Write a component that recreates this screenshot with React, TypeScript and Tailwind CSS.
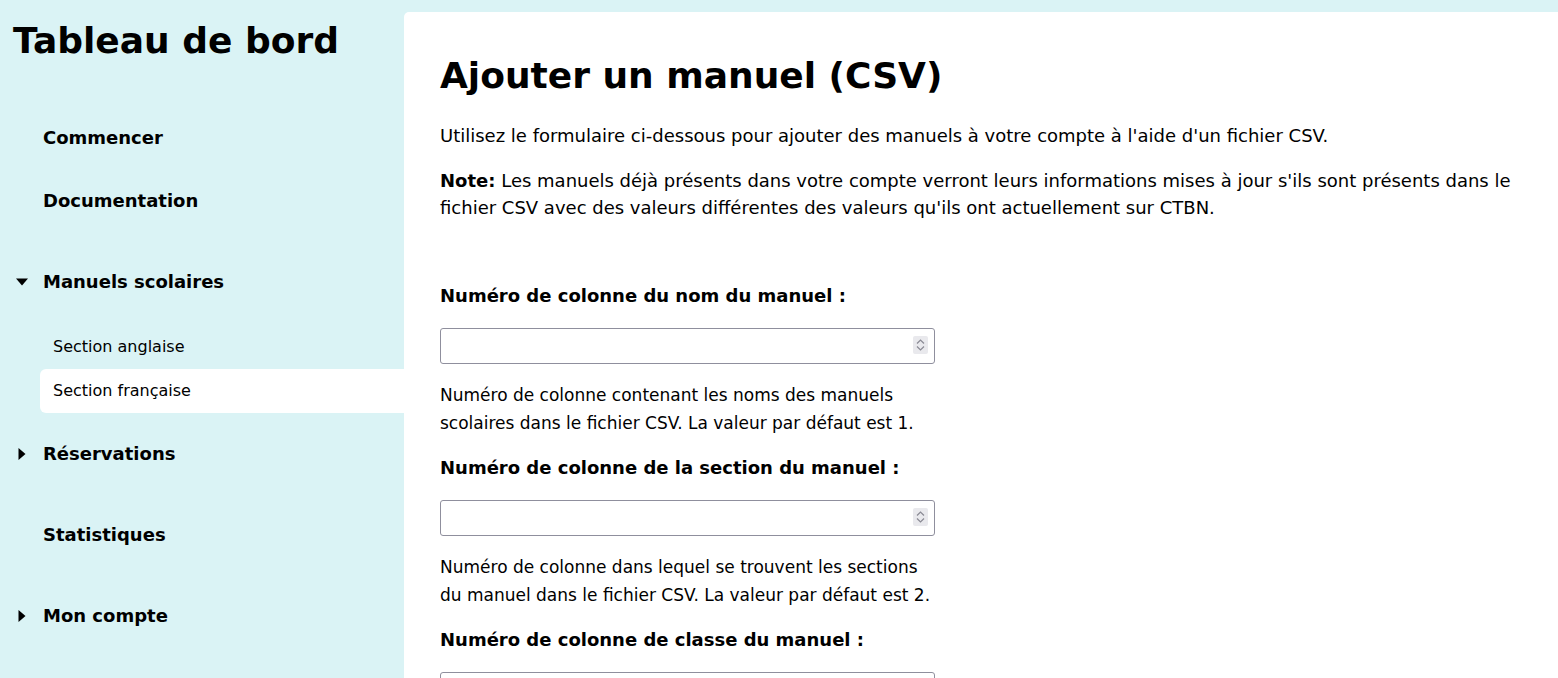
const font = "font-['DejaVu_Sans',_'Liberation_Sans',_sans-serif]";

function CaretDown() {
  return (
    <svg width="14" height="8" viewBox="0 0 14 8" className="shrink-0">
      <polygon points="1,0.5 13,0.5 7,7.5" fill="#000" />
    </svg>
  );
}

function CaretRight() {
  return (
    <svg width="8" height="14" viewBox="0 0 8 14" className="shrink-0">
      <polygon points="0.5,1 7.5,7 0.5,13" fill="#000" />
    </svg>
  );
}

function NavItem({
  label,
  caret,
  className = "",
}: {
  label: string;
  caret?: "down" | "right";
  className?: string;
}) {
  return (
    <div className={`flex h-[63px] items-center ${className}`}>
      <div className="flex w-[43px] justify-center pl-[1px]">
        {caret === "down" && <CaretDown />}
        {caret === "right" && <CaretRight />}
      </div>
      <span className="text-[18px] font-bold">{label}</span>
    </div>
  );
}

function Spinner() {
  return (
    <div className="pointer-events-none absolute right-[7px] top-[8px] flex h-[18px] w-[15px] flex-col items-center justify-center gap-[2px] rounded-[2px] bg-[#e9e9ed]">
      <svg width="9" height="5" viewBox="0 0 9 5">
        <polyline points="1,4.5 4.5,1 8,4.5" fill="none" stroke="#8a8a94" strokeWidth="1.2" />
      </svg>
      <svg width="9" height="5" viewBox="0 0 9 5">
        <polyline points="1,0.5 4.5,4 8,0.5" fill="none" stroke="#8a8a94" strokeWidth="1.2" />
      </svg>
    </div>
  );
}

function NumberField({ label, help }: { label: string; help: string }) {
  return (
    <div className="mb-[17px]">
      <label className="mb-[19px] block text-[18px] font-bold leading-[27px]">{label}</label>
      <div className="relative">
        <input
          type="number"
          className="block h-[36px] w-full rounded-[3px] border border-[#8f8f9d] bg-white px-2 text-[17px] [appearance:textfield] [&::-webkit-inner-spin-button]:appearance-none [&::-webkit-outer-spin-button]:appearance-none"
        />
        <Spinner />
      </div>
      <p className="mt-[17px] text-[17px] leading-[28px]">{help}</p>
    </div>
  );
}

export default function App() {
  return (
    <div className={`flex min-h-[678px] bg-[#daf3f5] text-black ${font}`}>
      {/* Sidebar */}
      <aside className="w-[404px] shrink-0">
        <h1 className="pl-[13px] pt-[20px] text-[36px] font-bold leading-[41px]">Tableau de bord</h1>
        <nav className="mt-[45px]">
          <NavItem label="Commencer" />
          <NavItem label="Documentation" />
          <NavItem label="Manuels scolaires" caret="down" className="mt-[18px]" />
          <div className="mt-[12px] pl-[40px]">
            <div className="flex h-[44px] items-center pl-[13px] text-[16px]">Section anglaise</div>
            <div className="flex h-[44px] items-center rounded-l-md bg-white pl-[13px] text-[16px]">
              Section française
            </div>
          </div>
          <NavItem label="Réservations" caret="right" className="mt-[9px]" />
          <NavItem label="Statistiques" className="mt-[18px]" />
          <NavItem label="Mon compte" caret="right" className="mt-[18px]" />
        </nav>
      </aside>

      {/* Main */}
      <main className="mt-[12px] flex-1 rounded-tl-[5px] bg-white px-[36px] pt-[43px]">
        <h1 className="text-[36px] font-bold leading-[42px]">Ajouter un manuel (CSV)</h1>
        <p className="mt-[25px] text-[18px] leading-[27px]">
          Utilisez le formulaire ci-dessous pour ajouter des manuels à votre compte à l'aide d'un fichier CSV.
        </p>
        <p className="mt-[18px] text-[18px] leading-[27px]">
          <strong>Note:</strong> Les manuels déjà présents dans votre compte verront leurs informations mises à jour
          s'ils sont présents dans le fichier CSV avec des valeurs différentes des valeurs qu'ils ont actuellement sur
          CTBN.
        </p>

        <form className="mt-[61px] w-[495px]">
          <NumberField
            label="Numéro de colonne du nom du manuel :"
            help="Numéro de colonne contenant les noms des manuels scolaires dans le fichier CSV. La valeur par défaut est 1."
          />
          <NumberField
            label="Numéro de colonne de la section du manuel :"
            help="Numéro de colonne dans lequel se trouvent les sections du manuel dans le fichier CSV. La valeur par défaut est 2."
          />
          <NumberField
            label="Numéro de colonne de classe du manuel :"
            help="Numéro de colonne contenant la classe du manuel dans le fichier CSV. La valeur par défaut est 3."
          />
        </form>
      </main>
    </div>
  );
}
